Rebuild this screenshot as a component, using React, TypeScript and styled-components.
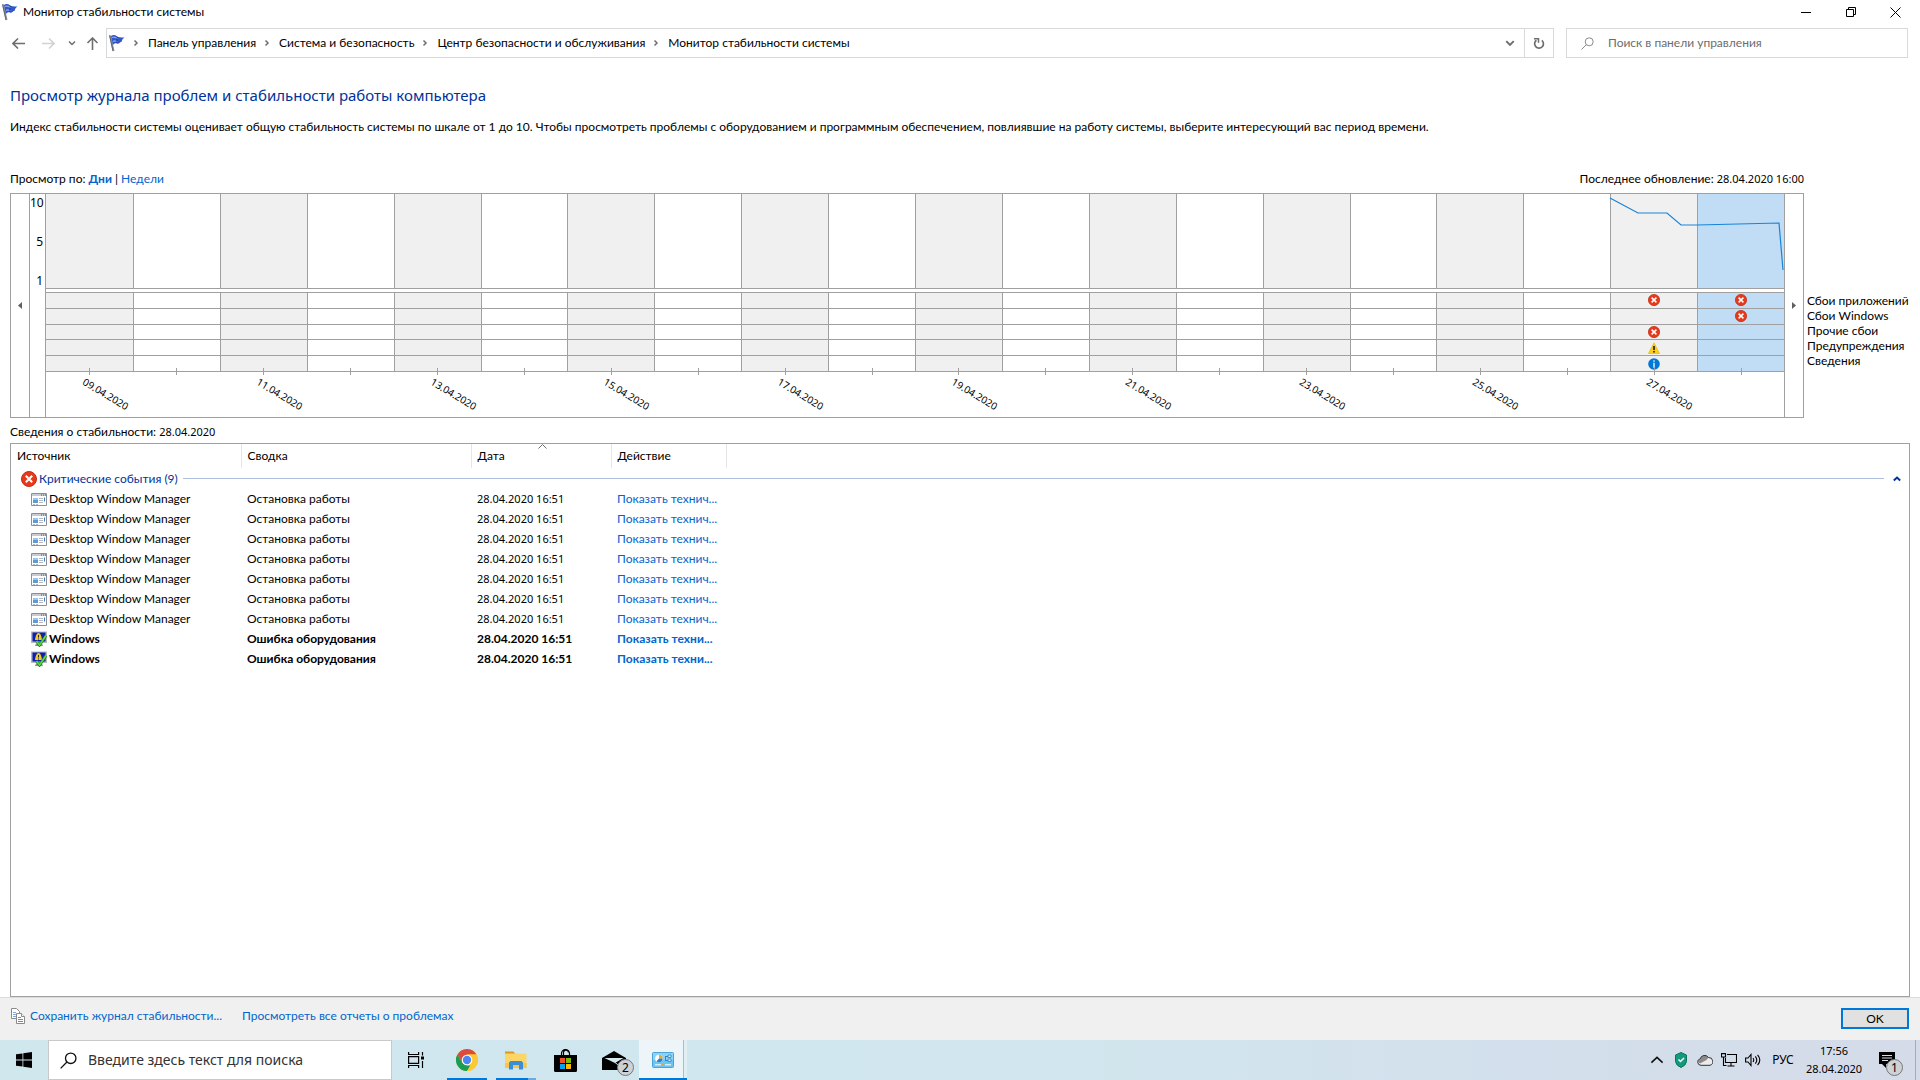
import React from 'react';
import styled, { createGlobalStyle } from 'styled-components';

const ui = 'Lato, "Noto Sans", sans-serif';
const display = '"Noto Sans", "Open Sans", sans-serif';
const line = '#a0a0a0';
const link = '#0066cc';

const Global = createGlobalStyle`
  *, *::before, *::after { box-sizing: border-box; }
  body { margin: 0; background: #fff; color: #000; font: 12px/16px ${ui}; }
  button, input { font: inherit; color: inherit; }
  button { padding: 0; border: 0; background: none; }
  a { color: ${link}; text-decoration: none; }
  svg { display: block; flex: none; }
`;

/* ---------- window frame ---------- */
const Screen = styled.div`
  min-height: 100vh;
  display: flex;
  flex-direction: column;
`;
const TitleBar = styled.header`
  display: flex;
  align-items: center;
  height: 24px;
  padding: 0 2px;
`;
const TitleText = styled.h1`
  flex: 1;
  margin: 0 0 0 5px;
  font-size: 12px;
  font-weight: 400;
`;
const Caption = styled.button`
  width: 45px;
  height: 20px;
  display: grid;
  place-items: center;
`;
const NavBar = styled.nav`
  display: flex;
  align-items: center;
  height: 30px;
  margin-top: 4px;
  padding: 0 12px;
`;
const NavButton = styled.button<{ $w: number }>`
  width: ${p => p.$w}px;
  height: 28px;
  display: flex;
  align-items: center;
`;
const Address = styled.div`
  flex: 1;
  height: 30px;
  display: flex;
  align-items: center;
  border: 1px solid #d9d9d9;
`;
const Crumbs = styled.ol`
  flex: 1;
  display: flex;
  align-items: center;
  gap: 7px;
  margin: 0;
  padding: 0 0 0 2px;
  list-style: none;
`;
const Crumb = styled.li`
  display: flex;
  align-items: center;
  gap: 8px;
  a { color: #000; }
`;
const AddressButton = styled.button<{ $split?: boolean }>`
  width: 29px;
  height: 28px;
  display: grid;
  place-items: center;
  border-left: ${p => (p.$split ? '1px solid #d9d9d9' : '0')};
`;
const SearchBox = styled.label`
  display: flex;
  align-items: center;
  gap: 14px;
  width: 342px;
  height: 30px;
  margin-left: 12px;
  padding: 0 14px;
  border: 1px solid #d9d9d9;
  input {
    flex: 1;
    min-width: 0;
    padding: 0;
    border: 0;
    outline: 0;
    background: none;
  }
  input::placeholder { color: #6d6d6d; opacity: 1; }
`;

/* ---------- page ---------- */
const Main = styled.main`
  flex: 1;
  display: flex;
  flex-direction: column;
  padding: 25px 10px 0;
`;
const Heading = styled.h2`
  margin: 0;
  font: 400 15px/24px ${display};
  color: #003399;
`;
const Intro = styled.p`
  margin: 12px 0 36px;
`;
const ViewRow = styled.div`
  display: flex;
  justify-content: space-between;
  margin: 0 106px 6px 0;
`;
const Day = styled.a`
  font-weight: 700;
`;
const Stamp = styled.time`
  font-family: ${display};
  font-size: 11px;
  line-height: 12px;
`;

/* ---------- chart ---------- */
const ChartRow = styled.section`
  display: flex;
`;
const ChartFrame = styled.div`
  flex: 1;
  display: flex;
  height: 225px;
  border: 1px solid ${line};
`;
const Scroll = styled.button`
  width: 18px;
  display: grid;
  place-items: center;
`;
const Axis = styled.div`
  width: 17px;
  display: flex;
  flex-direction: column;
  gap: 23px;
  padding: 1px 2px 0 0;
  border-left: 1px solid ${line};
  border-right: 1px solid ${line};
  text-align: right;
  font: 12px/16px ${display};
`;
const Plot = styled.div`
  flex: 1;
  border-right: 1px solid ${line};
`;
const Columns = styled.div`
  display: grid;
  grid-template-columns: repeat(20, minmax(0, 1fr));
`;
const IndexArea = styled.div`
  position: relative;
  border-bottom: 1px solid ${line};
  margin-bottom: 3px;
`;
const IndexLine = styled.svg`
  position: absolute;
  inset: 0;
  width: 100%;
  height: 100%;
`;
const shade = { grey: '#f0f0f0', white: '#fff', picked: '#c0ddf5' };
type Shade = keyof typeof shade;
const IndexColumn = styled.div<{ $shade: Shade }>`
  height: 94px;
  background: ${p => shade[p.$shade]};
  &:not(:first-child) { border-left: 1px solid ${line}; }
`;
const EventArea = styled(Columns)`
  border-bottom: 1px solid ${line};
`;
const EventColumn = styled.div<{ $shade: Shade }>`
  display: grid;
  grid-template-rows: repeat(5, 1fr);
  height: 79px;
  background: ${p => shade[p.$shade]};
  &:not(:first-child) { border-left: 1px solid ${line}; }
`;
const EventCell = styled.div`
  display: grid;
  place-items: center;
  border-top: 1px solid ${line};
`;
const DateCell = styled.div`
  position: relative;
  height: 45px;
  padding-left: 43px;
  &::before {
    content: '';
    position: absolute;
    left: 50%;
    top: -4px;
    height: 7px;
    border-left: 1px solid ${line};
  }
`;
const DateLabel = styled.span`
  display: block;
  width: max-content;
  padding-top: 4px;
  font: 10px/12px ${display};
  transform: rotate(31deg);
  transform-origin: 0 0;
`;
const Legend = styled.ul`
  width: 106px;
  margin: 0;
  padding: 100px 0 0 3px;
  list-style: none;
  line-height: 15px;
  white-space: nowrap;
`;

/* ---------- event list ---------- */
const ListTitle = styled.h3`
  margin: 6px 0 3px;
  font-size: 12px;
  font-weight: 400;
`;
const ListFrame = styled.section`
  flex: 1;
  border: 1px solid ${line};
`;
const Table = styled.table`
  width: 100%;
  table-layout: fixed;
  border-collapse: collapse;
  white-space: nowrap;
`;
const Head = styled.th`
  position: relative;
  height: 24px;
  padding: 0 6px;
  font-weight: 400;
  text-align: left;
  &:not(:last-child) { border-right: 1px solid #e5e5e5; }
`;
const SortMark = styled.svg`
  position: absolute;
  top: 0;
  left: 66px;
`;
const Cell = styled.td`
  height: 20px;
  padding: 0 6px;
`;
const GroupCell = styled(Cell)`
  height: 21px;
`;
const Row = styled.tr<{ $bold: boolean }>`
  font-weight: ${p => (p.$bold ? 700 : 400)};
`;
const Source = styled.div`
  display: flex;
  align-items: center;
  gap: 2px;
  padding-left: 14px;
`;
const Group = styled.div`
  display: flex;
  align-items: center;
  gap: 2px;
  padding: 0 2px 0 4px;
  color: #003399;
`;
const GroupRule = styled.div`
  flex: 1;
  height: 1px;
  margin: 0 7px 0 3px;
  background: #b0bfde;
`;

/* ---------- footer ---------- */
const Footer = styled.footer`
  display: flex;
  align-items: flex-start;
  gap: 20px;
  height: 43px;
  padding: 10px 11px 0;
  background: #f0f0f0;
  border-top: 1px solid #dcdcdc;
`;
const FooterLink = styled.a`
  display: flex;
  align-items: center;
  gap: 5px;
`;
const Ok = styled.button`
  width: 68px;
  height: 21px;
  margin-left: auto;
  border: 2px solid #0078d7;
  background: #e1e1e1;
`;

/* ---------- taskbar ---------- */
const Taskbar = styled.div`
  display: flex;
  height: 40px;
  background: linear-gradient(90deg, #d0e7ee, #d1e6ee 55%, #d3dfec 80%, #d5dbe8);
`;
const Task = styled.button<{ $active?: boolean }>`
  position: relative;
  width: 48px;
  display: grid;
  place-items: center;
  background: ${p => (p.$active ? '#edf5f8' : 'none')};
`;
const Pinned = styled.div`
  display: flex;
  gap: 1px;
  padding-left: 3px;
`;
const Running = styled.span<{ $stack?: boolean }>`
  position: absolute;
  left: 4px;
  bottom: 0;
  width: 40px;
  height: 2px;
  background: ${p => (p.$stack ? 'linear-gradient(90deg, #0078d7 32px, #69abe3 32px)' : '#0078d7')};
`;
const ActiveEdge = styled.span`
  position: absolute;
  right: 0;
  top: 0;
  bottom: 0;
  width: 4px;
  border-left: 1px solid #a9bec6;
  background: #e0eff4;
`;
const ActiveBar = styled.span`
  position: absolute;
  left: 0;
  right: 0;
  bottom: 0;
  height: 2px;
  background: #0078d7;
`;
const TaskSearch = styled.label`
  display: flex;
  align-items: center;
  gap: 11px;
  width: 344px;
  padding: 0 11px;
  background: #fff;
  border: 1px solid #c9c9c9;
  input {
    flex: 1;
    min-width: 0;
    padding: 0;
    border: 0;
    outline: 0;
    background: none;
    font: 14px/20px ${display};
  }
  input::placeholder { color: #333; opacity: 1; }
`;
const Badge = styled.span`
  position: absolute;
  right: 4px;
  bottom: 4px;
  width: 17px;
  height: 17px;
  border: 1px solid #777;
  border-radius: 50%;
  background: #cdd2d6;
  font: 12px/15px ${display};
  text-align: center;
`;
const Tray = styled.div`
  display: flex;
  align-items: center;
  margin-left: auto;
`;
const TrayIcon = styled.button`
  width: 24px;
  height: 40px;
  display: grid;
  place-items: center;
`;
const Lang = styled.button`
  width: 36px;
  font: 12px/16px ${display};
`;
const Clock = styled.time`
  width: 66px;
  font: 11px/18px ${display};
  text-align: center;
`;
const Notify = styled(Task)`
  width: 40px;
  height: 40px;
`;
const Peek = styled.span`
  width: 5px;
  margin-left: 8px;
  align-self: stretch;
  border-left: 1px solid #a5adb8;
`;

/* ---------- icons ---------- */
const Flag = () => (
  <svg width="16" height="18" viewBox="0 0 16 18">
    <path d="M1 1.500 4.500 17" stroke="#8b9299" strokeWidth="2" />
    <path d="M.6 1.200 4 17" stroke="#4d555e" strokeWidth=".7" />
    <path d="M2 2C4 .4 6 .8 8 2.200c1.500 1.200 3.500 1 7.500 1.400-1.500 1-2.500 2-2.800 4.200C11 7.800 10 10.500 8 9.600 6.500 8.800 5.500 9.300 3.800 10.800z" fill="#3157c8" />
    <path d="M3 3.500c2.500-1.500 4 .4 6 1.200M4 7.500c1.500-1.200 3-.4 4.500.2" stroke="#8ba6f2" strokeWidth="1.200" fill="none" />
    <path d="M8.500 3c-.8 2-.4 4-.8 6" stroke="#1c379a" fill="none" />
  </svg>
);
const Arrow = ({ kind, color = '#6e6e6e' }: { kind: 'back' | 'forward' | 'up'; color?: string }) => (
  <svg width="13" height="13" viewBox="0 0 13 13" fill="none" stroke={color} strokeWidth="1.600">
    {kind === 'back' && <path d="M13 6.500H1M6 1.500l-5 5 5 5" />}
    {kind === 'forward' && <path d="M0 6.500h12M7 1.500l5 5-5 5" />}
    {kind === 'up' && <path d="M6.500 13V1M1.500 6l5-5 5 5" />}
  </svg>
);
const Chevron = ({ dir, size = 8, color = '#6e6e6e', w = 1.5 }: { dir: 'right' | 'down' | 'up'; size?: number; color?: string; w?: number }) => (
  <svg width={size} height={size} viewBox="0 0 8 8" fill="none" stroke={color} strokeWidth={w}>
    {dir === 'right' && <path d="M2.500 1.500 5 4l-2.500 2.500" />}
    {dir === 'down' && <path d="M1 2.500l3 3 3-3" />}
    {dir === 'up' && <path d="M.8 5.500 4 2.500l3.200 3" />}
  </svg>
);
const Refresh = () => (
  <svg width="12" height="13" viewBox="0 0 12 13" fill="none" stroke="#6e6e6e" strokeWidth="1.700">
    <path d="M8.800 3.300A4.400 4.400 0 1 1 3.400 3.200" />
    <path d="M1 1.800h4.500v4" strokeWidth="1.500" />
  </svg>
);
const Magnifier = ({ size, color, w = 1 }: { size: number; color: string; w?: number }) => (
  <svg width={size} height={size} viewBox="0 0 13 13" fill="none" stroke={color} strokeWidth={w}>
    <circle cx="8.200" cy="4.800" r="4" />
    <path d="M5.300 7.700.5 12.500" />
  </svg>
);
const ErrorMark = ({ size }: { size: number }) => (
  <svg width={size} height={size} viewBox="0 0 16 16">
    <circle cx="8" cy="8" r="7.500" fill="#e8391d" stroke="#c42b12" />
    <path d="M4.800 4.800l6.400 6.400M11.200 4.800l-6.400 6.400" stroke="#fff" strokeWidth="2" />
  </svg>
);
const Warning = () => (
  <svg width="12" height="12" viewBox="0 0 12 12">
    <path d="M6 .8 11.600 11.500H.4z" fill="#fccf1b" stroke="#e6b400" strokeWidth=".6" />
    <path d="M6 4v4M6 9v1.500" stroke="#111" strokeWidth="1.500" />
  </svg>
);
const Info = () => (
  <svg width="12" height="12" viewBox="0 0 12 12">
    <circle cx="6" cy="6" r="5.800" fill="#0078d7" />
    <path d="M6 2.300v1.400M6 4.700v5" stroke="#fff" strokeWidth="1.300" />
  </svg>
);
const AppIcon = () => (
  <svg width="16" height="16" viewBox="0 0 16 16">
    <path d="M.5 2.500h15v12H.5z" fill="#fff" stroke="#8a8f98" />
    <path d="M1 3h14v2H1z" fill="#c6cbd4" />
    <path d="M10 3.500h1v1h-1zM12 3.500h1v1h-1zM14 3.500h1v1h-1z" fill="#444d5b" />
    <path d="M2 7h5v5H2z" fill="#5b9bd5" />
    <path d="M2 7h5v2H2z" fill="#9cc5ec" />
    <path d="M8 7.500h4M8 9.500h4M8 11.500h4M2 13.500h2M5 13.500h2" stroke="#b3b9c4" />
    <path d="M13.500 6.500v4" stroke="#3d7fc0" />
  </svg>
);
const WindowsIcon = () => (
  <svg width="16" height="16" viewBox="0 0 16 16">
    <path d="M0 .5h16v11.500H0z" fill="#b7b9b2" />
    <path d="M1.500 1.500h13v9h-13z" fill="#0d1fb8" />
    <path d="M5 12.500h6l1 2.500H4z" fill="#8c8e88" />
    <path d="M7.500 2c2 0 3 3 3.500 7H4c.5-4 1.500-7 3.500-7z" fill="#f0c927" />
    <path d="M7.500 4v2.500M7.500 7.500v1" stroke="#222" />
    <path d="M5.500 10l3 4.200L15 4.500" stroke="#1e7a1e" strokeWidth="2.800" fill="none" />
    <path d="M5.500 10l3 4.200L15 4.500" stroke="#5fd84a" strokeWidth="1.600" fill="none" />
  </svg>
);
const CopyIcon = () => (
  <svg width="14" height="16" viewBox="0 0 14 16" fill="#fff" stroke="#8a8a8a">
    <path d="M.5.5h5l3 3v7h-8z" />
    <path d="M2 4.500h3M2 6.500h3M2 8.500h3" stroke="#7fa9e0" />
    <path d="M5.500 5.500h5l3 3v7h-8z" />
    <path d="M10.500 5.500v3h3" />
    <path d="M7 9.500h3M7 11.500h5M7 13.500h5" stroke="#5b90dc" />
  </svg>
);
const StartLogo = () => (
  <svg width="16" height="16" viewBox="0 0 16 16">
    <path d="M0 2.300 6.500 1.400v6.100H0zM7.300 1.300 16 0v7.500H7.300zM0 8.400h6.500v6.200L0 13.700zM7.300 8.400H16V16l-8.700-1.300z" />
  </svg>
);
const TaskView = () => (
  <svg width="17" height="16" viewBox="0 0 17 16" fill="none" stroke="#000" strokeWidth="1.200">
    <path d="M.6 0v2.500h10V0M.6 16v-2.500h10V16M.6 4.600h10v6.800H.6zM14.500 0v3.500M14.500 9v7" />
    <path d="M13 4.500h3v3h-3z" fill="#000" stroke="none" />
  </svg>
);
const Chrome = () => (
  <svg width="22" height="22" viewBox="0 0 22 22">
    <circle cx="11" cy="11" r="11" fill="#fcc934" />
    <path d="M1.470 5.500A11 11 0 0 1 20.530 5.500H11L6.200 13.700z" fill="#dd4b3e" />
    <path d="M1.470 5.500 6.240 13.750 11 16.500h4.760L11 22A11 11 0 0 1 1.470 5.500z" fill="#1a9d55" />
    <path d="M20.530 5.500A11 11 0 0 1 11 22l4.760-8.250L11 5.500z" fill="#fcc934" />
    <circle cx="11" cy="11" r="5.300" fill="#fff" />
    <circle cx="11" cy="11" r="4.200" fill="#4a87f4" />
  </svg>
);
const Folder = () => (
  <svg width="22" height="19" viewBox="0 0 22 19">
    <path d="M0 .5h8.500L10.500 3H0z" fill="#d99a1c" />
    <path d="M0 2.500h21.500V17H0z" fill="#fbd667" />
    <path d="M0 12h21.500v5H0z" fill="#f6c64b" />
    <path d="M4 18.500v-7l1.500-1.500h11l1.500 1.500v7h-4v-4.500H8v4.500z" fill="#3a8dd6" />
  </svg>
);
const Store = () => (
  <svg width="23" height="23" viewBox="0 0 23 23">
    <path d="M7.500 7V4.500a4 4 0 0 1 8 0V7M9.500 7V4a2.500 2.500 0 0 1 5-.5" fill="none" stroke="#000" strokeWidth="1.200" />
    <path d="M0 6h23v15.500q0 1.500-1.500 1.500h-20Q0 23 0 21.500z" />
    <path d="M6 9h5v5H6z" fill="#f25022" /><path d="M12 9h5v5h-5z" fill="#7fba00" />
    <path d="M6 15h5v5H6z" fill="#00a4ef" /><path d="M12 15h5v5h-5z" fill="#ffb900" />
  </svg>
);
const Mail = () => (
  <svg width="24" height="19" viewBox="0 0 24 19">
    <path d="M0 7 12 0l12 7v12H0z" />
    <path d="M2.500 7h19L13 12z" fill="#d5e9ef" />
    <path d="M13 11.500l9 7" stroke="#d5e9ef" strokeWidth="1" />
  </svg>
);
const ControlPanel = () => (
  <svg width="22" height="16" viewBox="0 0 22 16">
    <rect x=".5" y=".5" width="21" height="15" rx="1" fill="#6cc4f2" stroke="#4ba3d8" />
    <path d="M1 1h20v7H1z" fill="#9fdcfa" opacity=".6" />
    <circle cx="7" cy="6.500" r="3.800" fill="#fff" />
    <path d="M7 6.500V2.700a3.800 3.800 0 0 1 3.800 3.800z" fill="#f4a522" />
    <path d="M7 6.500h3.800A3.800 3.800 0 0 1 4.500 9.300z" fill="#2b83c4" />
    <path d="M13 4.500h3M13 8.500h3M13.500 4v5" stroke="#2f86c0" fill="none" />
    <path d="M16 3h3v2.500h-3zM16 7h3v2.500h-3z" fill="#cdeefc" stroke="#2f86c0" strokeWidth=".8" />
    <path d="M3 12.800h6M13 12.800h6" stroke="#fff" /><path d="M9 12.800h3" stroke="#f4a522" strokeWidth="1.500" />
  </svg>
);
const Shield = () => (
  <svg width="12" height="16" viewBox="0 0 12 16">
    <path d="M6 .5 11.500 3v6.500Q11 13.500 6 15.500 1 13.500.5 9.500V3z" fill="#129a7d" stroke="#0a7460" />
    <path d="M3.500 7.500l2 2 3.500-3.500" stroke="#fff" strokeWidth="1.500" fill="none" />
  </svg>
);
const Cloud = () => (
  <svg width="16" height="12" viewBox="0 0 16 12">
    <path d="M4 11.300a3.300 3.300 0 0 1-.8-6.500A4.600 4.600 0 0 1 11.500 3.500 4 4 0 0 1 13 11.300z" fill="#ececec" />
    <path d="M3.200 4.800A4.600 4.600 0 0 1 11.500 3.500L9.500 6 3 9.500 1 8z" fill="#8b8b8b" />
    <path d="M4 11.300a3.300 3.300 0 0 1-.8-6.500A4.600 4.600 0 0 1 11.500 3.500 4 4 0 0 1 13 11.300z" fill="none" stroke="#333" />
  </svg>
);
const Network = () => (
  <svg width="16" height="14" viewBox="0 0 16 14" fill="none" stroke="#000" strokeWidth="1.100">
    <path d="M6 1.500h9.500v8h-11V5M10 9.500v3M6.500 13h7M.5.600h4V4h-4zM2.500 4v8.500h3" />
  </svg>
);
const Speaker = () => (
  <svg width="17" height="14" viewBox="0 0 17 14" fill="none" stroke="#000" strokeWidth="1.100">
    <path d="M.6 5h2.400l3-3.500v11L3 9H.6zM8 5q1.500 2 0 4M10.300 3.300q3 3.700 0 7.400M12.600 1.800q4.400 5.200 0 10.400" />
  </svg>
);
const Note = () => (
  <svg width="16" height="16" viewBox="0 0 16 16">
    <path d="M0 0h16v12H7v4l-4-4H0z" />
    <path d="M3 3.500h10M3 6h10M3 8.500h6" stroke="#d5dde9" />
  </svg>
);

/* ---------- data ---------- */
const crumbs = ['Панель управления', 'Система и безопасность', 'Центр безопасности и обслуживания', 'Монитор стабильности системы'];
const days = Array.from({ length: 20 }, (_, i) => i);
const shadeOf = (i: number): Shade => (i === 19 ? 'picked' : i % 2 ? 'white' : 'grey');
const labelOf = (i: number) => `${String(9 + i).padStart(2, '0')}.04.2020`;
const marks: Record<number, React.ReactNode[]> = {
  18: [<ErrorMark size={12} />, null, <ErrorMark size={12} />, <Warning />, <Info />],
  19: [<ErrorMark size={12} />, <ErrorMark size={12} />, null, null, null],
};
const legend = ['Сбои приложений', 'Сбои Windows', 'Прочие сбои', 'Предупреждения', 'Сведения'];
const events = Array.from({ length: 9 }, (_, i) =>
  i < 7
    ? { source: 'Desktop Window Manager', summary: 'Остановка работы', action: 'Показать технич...', bold: false }
    : { source: 'Windows', summary: 'Ошибка оборудования', action: 'Показать техни...', bold: true },
);

export default function App() {
  return (
    <Screen>
      <Global />
      <TitleBar>
        <Flag />
        <TitleText>Монитор стабильности системы</TitleText>
        <Caption aria-label="Свернуть"><svg width="10" height="10"><path d="M0 5.500h10" stroke="#000" /></svg></Caption>
        <Caption aria-label="Восстановить">
          <svg width="10" height="10" fill="none" stroke="#000"><path d="M.5 2.500h7v7h-7zM2.500 2V.5h7v7H8" /></svg>
        </Caption>
        <Caption aria-label="Закрыть"><svg width="11" height="11" stroke="#000"><path d="M.5.5l10 10M10.500.5l-10 10" /></svg></Caption>
      </TitleBar>

      <NavBar>
        <NavButton $w={30} aria-label="Назад"><Arrow kind="back" /></NavButton>
        <NavButton $w={26} aria-label="Вперёд"><Arrow kind="forward" color="#d2d2d2" /></NavButton>
        <NavButton $w={18} aria-label="Последние"><Chevron dir="down" /></NavButton>
        <NavButton $w={20} aria-label="Вверх"><Arrow kind="up" /></NavButton>
        <Address>
          <Crumbs>
            <li><Flag /></li>
            {crumbs.map(c => <Crumb key={c}><Chevron dir="right" /><a href="#">{c}</a></Crumb>)}
          </Crumbs>
          <AddressButton aria-label="Журнал"><Chevron dir="down" size={10} w={1.6} /></AddressButton>
          <AddressButton $split aria-label="Обновить"><Refresh /></AddressButton>
        </Address>
        <SearchBox>
          <Magnifier size={13} color="#8a8a8a" />
          <input type="search" aria-label="Поиск" placeholder="Поиск в панели управления" />
        </SearchBox>
      </NavBar>

      <Main>
        <Heading>Просмотр журнала проблем и стабильности работы компьютера</Heading>
        <Intro>
          Индекс стабильности системы оценивает общую стабильность системы по шкале от 1 до 10. Чтобы просмотреть проблемы с оборудованием и
          программным обеспечением, повлиявшие на работу системы, выберите интересующий вас период времени.
        </Intro>
        <ViewRow>
          <span>Просмотр по: <Day href="#">Дни</Day> | <a href="#">Недели</a></span>
          <span>Последнее обновление: <Stamp>28.04.2020 16:00</Stamp></span>
        </ViewRow>

        <ChartRow>
          <ChartFrame>
            <Scroll aria-label="Раньше"><svg width="4" height="7"><path d="M4 0v7L0 3.500z" fill="#606060" /></svg></Scroll>
            <Axis><span>10</span><span>5</span><span>1</span></Axis>
            <Plot>
              <IndexArea>
                <Columns>{days.map(i => <IndexColumn key={i} $shade={shadeOf(i)} />)}</Columns>
                <IndexLine viewBox="0 0 1738 94" preserveAspectRatio="none">
                  <polyline
                    points="1564,4 1592,19 1621,19 1635,31 1651,31 1733,29 1737,76"
                    fill="none" stroke="#1883d7" strokeWidth="1.200" vectorEffect="non-scaling-stroke"
                  />
                </IndexLine>
              </IndexArea>
              <EventArea>
                {days.map(i => (
                  <EventColumn key={i} $shade={shadeOf(i)}>
                    {legend.map((l, r) => <EventCell key={l}>{marks[i]?.[r]}</EventCell>)}
                  </EventColumn>
                ))}
              </EventArea>
              <Columns>
                {days.map(i => <DateCell key={i}>{i % 2 === 0 && <DateLabel>{labelOf(i)}</DateLabel>}</DateCell>)}
              </Columns>
            </Plot>
            <Scroll aria-label="Позже"><svg width="4" height="7"><path d="M0 0v7l4-3.500z" fill="#606060" /></svg></Scroll>
          </ChartFrame>
          <Legend>{legend.map(l => <li key={l}>{l}</li>)}</Legend>
        </ChartRow>

        <ListTitle>Сведения о стабильности: <Stamp>28.04.2020</Stamp></ListTitle>
        <ListFrame>
          <Table>
            <colgroup><col width="230" /><col width="230" /><col width="140" /><col width="115" /><col /></colgroup>
            <thead>
              <tr>
                <Head>Источник</Head>
                <Head>Сводка</Head>
                <Head>
                  Дата
                  <SortMark width="9" height="5" viewBox="0 0 9 5" fill="none" stroke="#6e6e6e"><path d="M.5 4.500l4-4 4 4" /></SortMark>
                </Head>
                <Head>Действие</Head>
                <Head aria-hidden="true" />
              </tr>
            </thead>
            <tbody>
              <tr>
                <GroupCell colSpan={5}>
                  <Group>
                    <ErrorMark size={16} />
                    Критические события (9)
                    <GroupRule />
                    <button aria-label="Свернуть группу"><Chevron dir="up" color="#003399" w={2} /></button>
                  </Group>
                </GroupCell>
              </tr>
              {events.map((e, i) => (
                <Row key={i} $bold={e.bold}>
                  <Cell><Source>{e.bold ? <WindowsIcon /> : <AppIcon />}{e.source}</Source></Cell>
                  <Cell>{e.summary}</Cell>
                  <Cell>{e.bold ? '28.04.2020 16:51' : <Stamp>28.04.2020 16:51</Stamp>}</Cell>
                  <Cell><a href="#">{e.action}</a></Cell>
                  <Cell />
                </Row>
              ))}
            </tbody>
          </Table>
        </ListFrame>
      </Main>

      <Footer>
        <FooterLink href="#"><CopyIcon />Сохранить журнал стабильности...</FooterLink>
        <FooterLink href="#">Просмотреть все отчеты о проблемах</FooterLink>
        <Ok>OK</Ok>
      </Footer>

      <Taskbar>
        <Task aria-label="Пуск"><StartLogo /></Task>
        <TaskSearch>
          <Magnifier size={17} color="#111" />
          <input type="search" aria-label="Поиск в Windows" placeholder="Введите здесь текст для поиска" />
        </TaskSearch>
        <Task aria-label="Представление задач"><TaskView /></Task>
        <Pinned>
          <Task aria-label="Chrome"><Chrome /><Running /></Task>
          <Task aria-label="Проводник"><Folder /><Running $stack /></Task>
          <Task aria-label="Store"><Store /></Task>
          <Task aria-label="Почта"><Mail /><Badge>2</Badge></Task>
          <Task $active aria-label="Панель управления"><ControlPanel /><ActiveEdge /><ActiveBar /></Task>
        </Pinned>
        <Tray>
          <TrayIcon aria-label="Скрытые значки"><Chevron dir="up" size={14} color="#111" w={0.9} /></TrayIcon>
          <TrayIcon aria-label="Защита"><Shield /></TrayIcon>
          <TrayIcon aria-label="OneDrive"><Cloud /></TrayIcon>
          <TrayIcon aria-label="Сеть"><Network /></TrayIcon>
          <TrayIcon aria-label="Звук"><Speaker /></TrayIcon>
          <Lang>РУС</Lang>
          <Clock>17:56<br />28.04.2020</Clock>
          <Notify aria-label="Уведомления"><Note /><Badge>1</Badge></Notify>
          <Peek />
        </Tray>
      </Taskbar>
    </Screen>
  );
}
